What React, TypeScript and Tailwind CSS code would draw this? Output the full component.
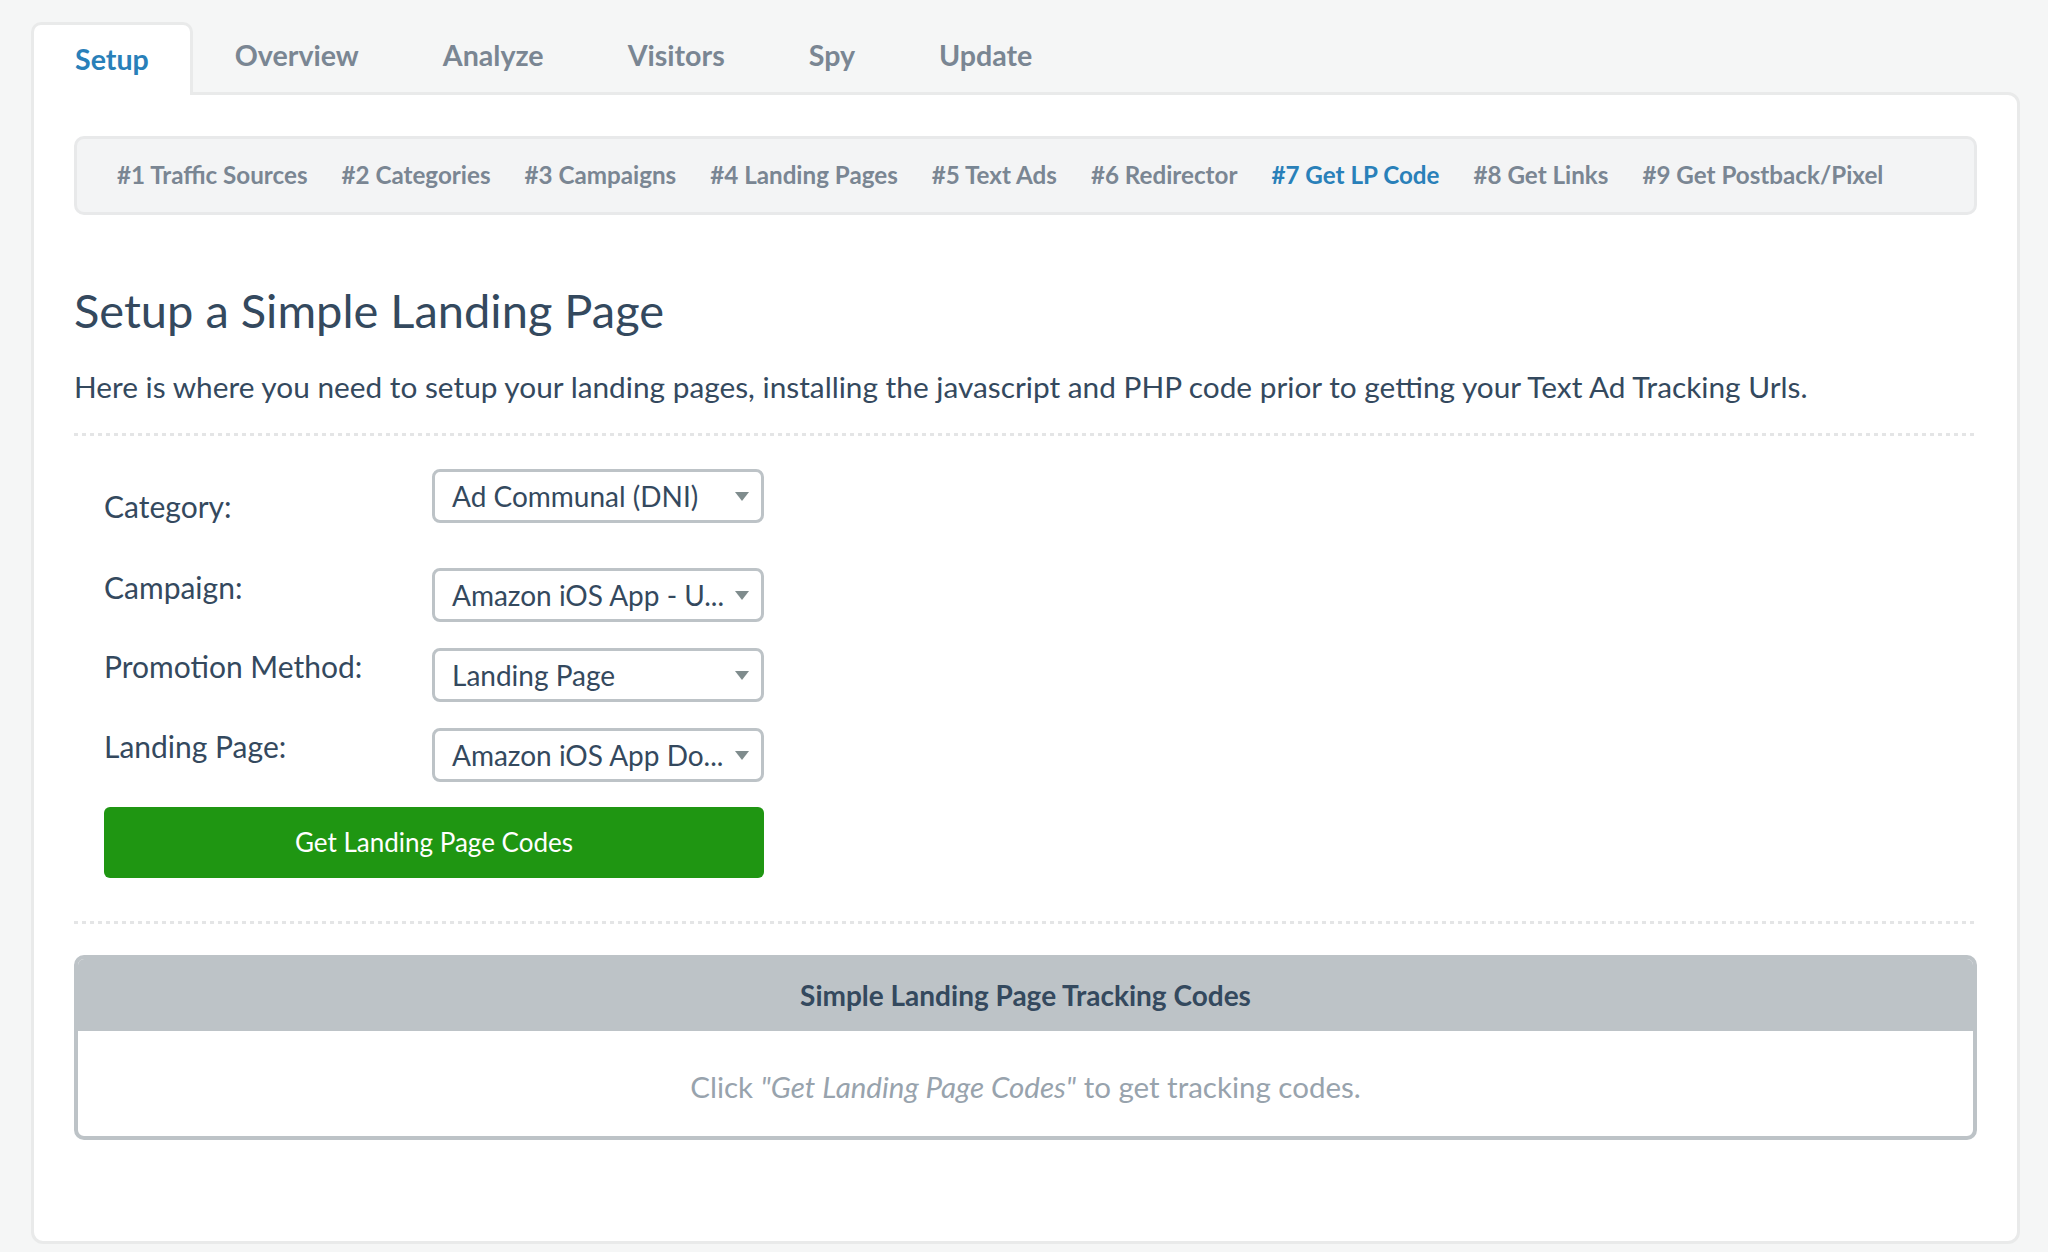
const TABS = ['Setup', 'Overview', 'Analyze', 'Visitors', 'Spy', 'Update'];

const STEPS = [
  '#1 Traffic Sources',
  '#2 Categories',
  '#3 Campaigns',
  '#4 Landing Pages',
  '#5 Text Ads',
  '#6 Redirector',
  '#7 Get LP Code',
  '#8 Get Links',
  '#9 Get Postback/Pixel',
];

function Caret() {
  return (
    <svg width="16" height="11" viewBox="0 0 16 11" className="shrink-0">
      <path d="M1 1h14L8 10z" fill="#7f8c8d" />
    </svg>
  );
}

function FakeSelect({ value }: { value: string }) {
  return (
    <div className="flex h-[54px] w-[332px] items-center justify-between rounded-[8px] border-[3px] border-[#bdc3c7] bg-white pl-[17px] pr-[11px] text-[28px] leading-[34px] text-[#34495e]">
      <span className="whitespace-nowrap">{value}</span>
      <Caret />
    </div>
  );
}

function Dots() {
  return <div className="h-[3px] w-full bg-[repeating-linear-gradient(90deg,#e4e5e6_0_4px,transparent_4px_8px)]" />;
}

export default function App() {
  return (
    <div className="min-h-screen bg-[#f5f6f6] pl-[31px] pr-[28px] pt-[22px] font-[Lato,sans-serif]">
      {/* main tabs */}
      <div className="flex items-start">
        {TABS.map((t, i) =>
          i === 0 ? (
            <div
              key={t}
              className="relative z-10 h-[73px] rounded-t-[10px] border-[3px] border-b-0 border-[#e9eaea] bg-white px-[41px] pt-[14px] text-[28.6px] font-bold leading-[40px] text-[#2980b9]"
            >
              {t}
            </div>
          ) : (
            <div
              key={t}
              className="h-[70px] border-[3px] border-b-0 border-transparent px-[39px] pt-[10px] text-[28.6px] font-bold leading-[40px] text-[#7a8693]"
            >
              {t}
            </div>
          )
        )}
      </div>

      {/* panel */}
      <div className="-mt-[3px] rounded-[12px] rounded-tl-none border-[3px] border-[#e9eaea] bg-white px-[40px] pb-[101px] pt-[41px]">
        {/* step nav */}
        <div className="flex gap-[34px] rounded-[10px] border-[3px] border-[#e8e9ea] bg-[#f3f4f5] pb-[21px] pl-[40px] pt-[20px] text-[24.2px] font-bold leading-[32px] text-[#7a8693]">
          {STEPS.map((s, i) => (
            <span key={s} className={i === 6 ? 'whitespace-nowrap text-[#2980b9]' : 'whitespace-nowrap'}>
              {s}
            </span>
          ))}
        </div>

        <h1 className="mt-[65px] text-[47px] font-normal leading-[60px] text-[#34495e]">Setup a Simple Landing Page</h1>
        <p className="mt-[27px] text-[29.8px] leading-[40px] text-[#34495e]">
          Here is where you need to setup your landing pages, installing the javascript and PHP code prior to getting your Text Ad Tracking Urls.
        </p>

        <div className="mt-[26px]">
          <Dots />
        </div>

        {/* form */}
        <div className="mt-[33px] pl-[30px] text-[30px] text-[#34495e]">
          <div className="flex items-start">
            <div className="w-[328px] pt-[20px] leading-[34px]">Category:</div>
            <FakeSelect value="Ad Communal (DNI)" />
          </div>
          <div className="mt-[45px] flex items-start">
            <div className="w-[328px] pt-[1px] leading-[36px]">Campaign:</div>
            <FakeSelect value="Amazon iOS App - U..." />
          </div>
          <div className="mt-[26px] flex items-start">
            <div className="w-[328px] leading-[36px]">Promotion Method:</div>
            <FakeSelect value="Landing Page" />
          </div>
          <div className="mt-[26px] flex items-start">
            <div className="w-[328px] leading-[36px]">Landing Page:</div>
            <FakeSelect value="Amazon iOS App Do..." />
          </div>
          <button className="mt-[25px] flex h-[71px] w-[660px] items-center justify-center rounded-[6px] bg-[#1f9612] text-[26px] text-white">
            Get Landing Page Codes
          </button>
        </div>

        <div className="mt-[43px]">
          <Dots />
        </div>

        {/* tracking codes box */}
        <div className="mt-[31px] overflow-hidden rounded-[10px] border-[4px] border-[#bdc3c7]">
          <div className="flex h-[72px] items-center justify-center bg-[#bdc3c7] text-[28px] font-bold text-[#34495e]">
            Simple Landing Page Tracking Codes
          </div>
          <div className="flex h-[105px] items-center justify-center pt-[7px] text-[29.5px] text-[#98a3ad]">
            <span>
              Click <i>"Get Landing Page Codes"</i> to get tracking codes.
            </span>
          </div>
        </div>
      </div>
    </div>
  );
}
